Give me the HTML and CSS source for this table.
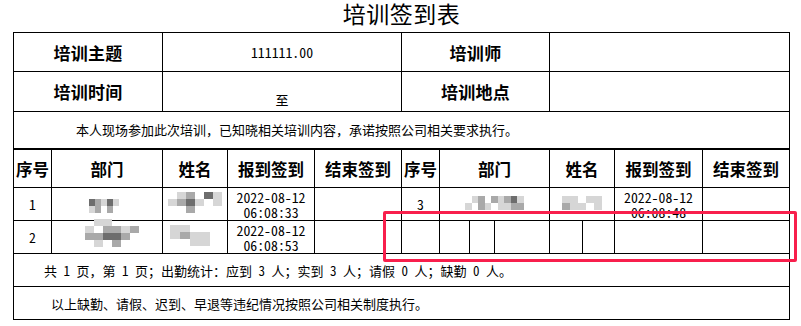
FILE: index.html
```html
<!DOCTYPE html>
<html lang="zh-CN">
<head>
<meta charset="utf-8">
<title>培训签到表</title>
<link rel="stylesheet" href="styles.css">
</head>
<body>
<div class="page">
  <h1 class="title">培训签到表</h1>
  <div class="sheet">
    <div class="cell label c2">培训主题</div>
    <div class="cell num c3">111111.00</div>
    <div class="cell label c4">培训师</div>
    <div class="cell c4"></div>

    <div class="cell label c2">培训时间</div>
    <div class="cell c3"><span class="to">至</span></div>
    <div class="cell label c4">培训地点</div>
    <div class="cell c4"></div>

    <div class="cell note thick c13">本人现场参加此次培训，已知晓相关培训内容，承诺按照公司相关要求执行。</div>

    <div class="cell head">序号</div>
    <div class="cell head">部门</div>
    <div class="cell head">姓名</div>
    <div class="cell head">报到签到</div>
    <div class="cell head">结束签到</div>
    <div class="cell head">序号</div>
    <div class="cell head c3">部门</div>
    <div class="cell head c2">姓名</div>
    <div class="cell head">报到签到</div>
    <div class="cell head">结束签到</div>

    <div class="cell num">1</div>
    <div class="cell"><span class="blur b-a"><i class="k3"></i><i class="k2"></i><i class="k1"></i><i class="k3"></i><i class="k1"></i><i class="k0"></i><i class="k1"></i><i class="k2"></i><i class="k0"></i><i class="k2"></i><i class="k0"></i><i class="k0"></i></span></div>
    <div class="cell"><span class="blur b-b"><i class="k0"></i><i class="k1"></i><i class="k2"></i><i class="k0"></i><i class="k3"></i><i class="k1"></i><i class="k1"></i><i class="k2"></i><i class="k3"></i><i class="k1"></i><i class="k0"></i><i class="k1"></i><i class="k0"></i><i class="k0"></i><i class="k2"></i><i class="k0"></i><i class="k0"></i><i class="k0"></i></span></div>
    <div class="cell num date">2022-08-12<br>06:08:33</div>
    <div class="cell"></div>
    <div class="cell num">3</div>
    <div class="cell c3"><span class="blur b-c"><i class="k0"></i><i class="k1"></i><i class="k2"></i><i class="k0"></i><i class="k2"></i><i class="k1"></i><i class="k2"></i><i class="k3"></i><i class="k1"></i><i class="k1"></i><i class="k0"></i><i class="k2"></i><i class="k1"></i><i class="k0"></i><i class="k1"></i><i class="k1"></i><i class="k2"></i><i class="k2"></i></span></div>
    <div class="cell c2"><span class="blur b-d"><i class="k1"></i><i class="k1"></i><i class="k0"></i><i class="k1"></i><i class="k1"></i><i class="k2"></i><i class="k1"></i><i class="k1"></i><i class="k0"></i><i class="k1"></i></span></div>
    <div class="cell num date">2022-08-12<br>06:08:48</div>
    <div class="cell"></div>

    <div class="cell num">2</div>
    <div class="cell"><span class="blur b-e"><i class="k0"></i><i class="k0"></i><i class="k1"></i><i class="k1"></i><i class="k0"></i><i class="k0"></i><i class="k0"></i><i class="k0"></i><i class="k1"></i><i class="k0"></i><i class="k2"></i><i class="k2"></i><i class="k1"></i><i class="k2"></i><i class="k0"></i><i class="k2"></i><i class="k2"></i><i class="k3"></i><i class="k3"></i><i class="k2"></i><i class="k0"></i><i class="k0"></i><i class="k0"></i><i class="k1"></i><i class="k0"></i><i class="k2"></i><i class="k0"></i><i class="k0"></i></span></div>
    <div class="cell"><span class="blur b-f"><i class="k1"></i><i class="k1"></i><i class="k0"></i><i class="k0"></i><i class="k0"></i><i class="k1"></i><i class="k2"></i><i class="k1"></i><i class="k1"></i><i class="k0"></i><i class="k0"></i><i class="k0"></i><i class="k1"></i><i class="k1"></i><i class="k0"></i></span></div>
    <div class="cell num date">2022-08-12<br>06:08:53</div>
    <div class="cell"></div>
    <div class="cell"></div>
    <div class="cell"></div>
    <div class="cell"></div>
    <div class="cell"></div>
    <div class="cell"></div>
    <div class="cell"></div>
    <div class="cell"></div>
    <div class="cell"></div>

    <div class="cell note sum c13">共 1 页，第 1 页；出勤统计：应到 3 人；实到 3 人；请假 0 人；缺勤 0 人。</div>
    <div class="cell note rule c13">以上缺勤、请假、迟到、早退等违纪情况按照公司相关制度执行。</div>
  </div>
  <div class="mark"></div>
</div>
</body>
</html>
```

FILE: styles.css
```css
html, body {
  margin: 0;
  padding: 0;
  background: #fff;
}
body {
  font-family: "Noto Sans CJK SC", "Noto Sans", sans-serif;
  color: #000;
  font-size: 13px;
}
.page {
  position: relative;
  width: 801px;
  height: 326px;
  padding-left: 13px;
  box-sizing: border-box;
}
.title {
  margin: 0;
  height: 32px;
  width: 777px;
  text-align: center;
  font-size: 23px;
  font-weight: 400;
  line-height: 26px;
  letter-spacing: 0.5px;
}
.sheet {
  display: grid;
  width: 777px;
  box-sizing: border-box;
  grid-template-columns: 38px 111px 65px 87px 87px 38px 30px 25px 55px 33px 32px 88px 87px;
  grid-template-rows: 39px 40px 38px 38px 33px 33px 33px 33px;
  border-left: 1px solid #000;
  border-top: 1px solid #000;
}
.cell {
  box-sizing: border-box;
  border-right: 1px solid #000;
  border-bottom: 1px solid #000;
  display: flex;
  align-items: center;
  justify-content: center;
  text-align: center;
  overflow: visible;
  white-space: nowrap;
}
.c2 { grid-column: span 2; }
.c3 { grid-column: span 3; }
.c4 { grid-column: span 4; }
.c13 { grid-column: span 13; }
.label {
  font-size: 17px;
  font-weight: 700;
  letter-spacing: 0.3px;
}
.head {
  font-size: 16.5px;
  font-weight: 700;
}
.num {
  font-family: "Noto Sans Mono CJK SC", "DejaVu Sans Mono", monospace;
  font-size: 13.8px;
}
.date {
  line-height: 14.5px;
  padding-top: 1px;
}
.to {
  padding-top: 16px;
  font-size: 13px;
}
.note {
  justify-content: flex-start;
  font-family: "Noto Sans Mono CJK SC", "Noto Sans CJK SC", sans-serif;
  font-size: 13px;
}
.thick {
  border-bottom-width: 2px;
  padding-left: 62px;
  padding-bottom: 2px;
}
.sum { padding-left: 30px; }
.rule { padding-left: 37px; }

.blur {
  display: inline-grid;
  grid-auto-rows: 7px;
}
.blur i {
  display: block;
  width: 100%;
  height: 100%;
}
.k0 { background: transparent; }
.k1 { background: #d6d6d6; }
.k2 { background: #a9a9a9; }
.k3 { background: #6d6d6d; }
.b-a { grid-template-columns: repeat(6, 6px); margin-top: 4px; }
.b-b { grid-template-columns: repeat(6, 9px); margin-top: -4px; }
.b-c { grid-template-columns: repeat(9, 6.5px); margin-top: -3px; }
.b-d { grid-template-columns: repeat(5, 8px); margin-top: -3px; }
.b-e { grid-template-columns: repeat(7, 9px); margin-top: -8px; }
.b-f { grid-template-columns: repeat(5, 10px); margin-top: -4px; }

.mark {
  position: absolute;
  left: 383px;
  top: 211px;
  width: 414px;
  height: 51px;
  box-sizing: border-box;
  border: 3px solid #f81f4c;
  border-radius: 2px;
}
```
